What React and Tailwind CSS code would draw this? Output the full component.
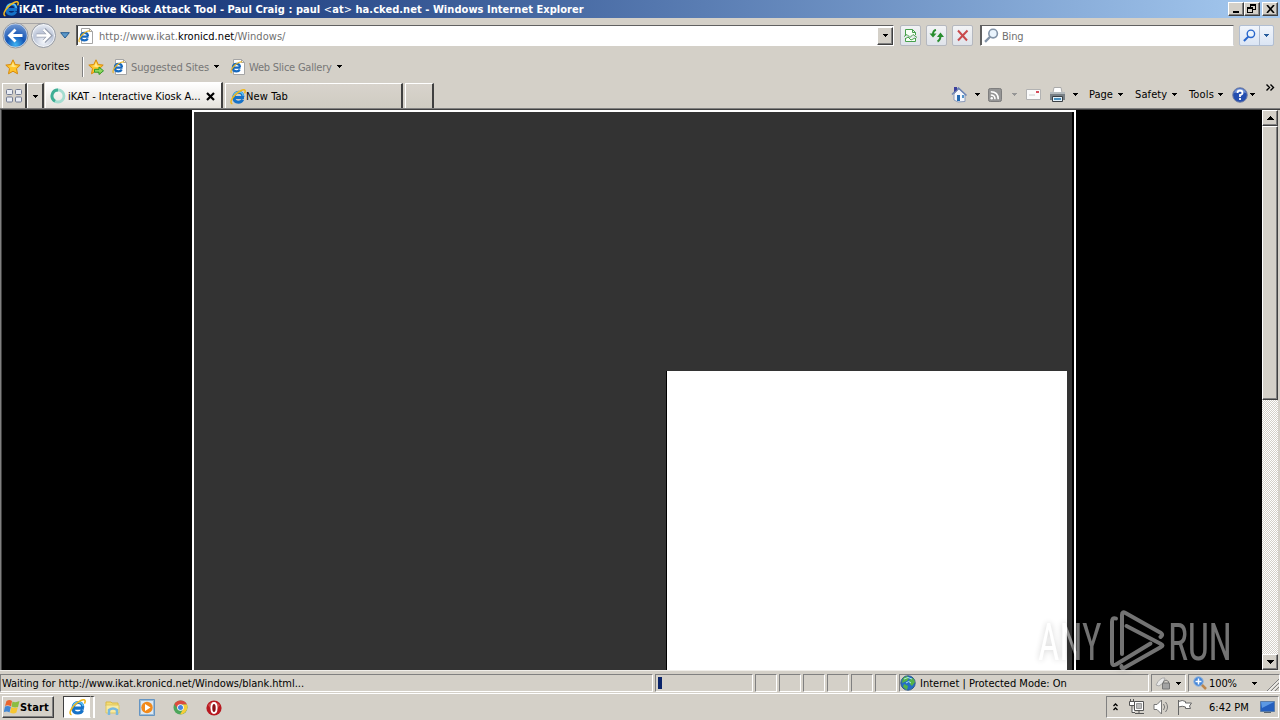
import clsx from "clsx";

const sunken = "border border-t-[#808080] border-l-[#808080] border-b-white border-r-white";
const raised =
  "border border-t-white border-l-white border-b-[#404040] border-r-[#404040] shadow-[inset_-1px_-1px_0_#808080]";
const tabEdge = "border-t border-l border-r-2 border-t-white border-l-white border-r-[#404040]";

function Caret({ className }) {
  return (
    <svg className={clsx("shrink-0", className)} width="5" height="3" viewBox="0 0 5 3" fill="currentColor" shapeRendering="crispEdges">
      <path d="M0 0h5v1H4v1H3v1H2V2H1V1H0z" />
    </svg>
  );
}

function IELogo({ size = 16, className }) {
  return (
    <svg className={clsx("shrink-0", className)} width={size} height={size} viewBox="0 0 16 16" fill="none">
      <path d="M14 8.600H5M12.900 8C12.900 5 11.300 3.300 8.800 3.300 5.800 3.300 3.800 5.600 3.800 8.600c0 2.800 1.800 4.600 4.600 4.600 2.100 0 3.600-1 4.300-2.700" stroke="#1672c8" strokeWidth="3" />
      <path d="M3.500 7.500C4.200 4.600 6.300 3 8.900 3c2.500 0 4 1.500 4.400 3.800" stroke="#5cc4f5" strokeWidth="1.400" />
      <path d="M2.400 14.900C-.6 14 1.600 9.200 5.300 5.600 9 2 13.900-.4 15 1.300c.5.900.1 2-.5 3" stroke="#efb71f" strokeWidth="1.500" />
    </svg>
  );
}

function PageIE({ className }) {
  return (
    <svg className={clsx("shrink-0", className)} width="16" height="16" viewBox="0 0 16 16" fill="none">
      <path d="M3.5.5h8l3 3v12h-11z" fill="#fff" stroke="#a5a5a5" />
      <path d="M11.5.5v3h3" stroke="#a5a5a5" />
      <path d="M10.500 8.700H3.400M10 8C9.800 6 8.500 4.900 6.600 4.900 4.300 4.900 2.900 6.600 2.900 8.900c0 2.100 1.400 3.500 3.600 3.500 1.500 0 2.700-.7 3.200-1.900" stroke="#1769bd" strokeWidth="2.200" />
      <path d="M1.600 13.900C-.2 12.900 2.200 8.600 5 6c2.800-2.500 6.400-4 7.200-2.700" stroke="#e9b424" strokeWidth="1.200" />
    </svg>
  );
}

function Star({ add, className }) {
  return (
    <svg className={clsx("shrink-0", className)} width="16" height="16" viewBox="0 0 16 16">
      <path d="M8 .8l2.2 4.7 5 .6-3.7 3.5 1 5.2L8 12.2l-4.5 2.6 1-5.2L.8 6.1l5-.6z" fill="#ffc52b" stroke="#d7890b" />
      <path d="M8 3l1.3 3.5 3 .4-3.3 1.4L4.1 7l2.5-.6z" fill="#ffe88c" />
      {add && <path d="M6.500 10.300h4.500V8l4.500 3.800-4.500 3.700v-2.300H6.500z" fill="#8fd75f" stroke="#2f9a2a" />}
    </svg>
  );
}

function CaptionButton({ children, className }) {
  return <div className={clsx("flex h-[14px] w-[16px] items-center justify-center bg-[#d4d0c8]", raised, className)}>{children}</div>;
}

function TitleBar() {
  return (
    <div className="flex h-[18px] shrink-0 items-center bg-linear-to-r from-[#0a246a] to-[#a6caf0] pr-[2px] pl-[3px] text-white">
      <IELogo />
      <span className="flex-1 text-[11px] font-bold tracking-[0.05px] whitespace-nowrap">
        iKAT - Interactive Kiosk Attack Tool - Paul Craig : paul <span className="font-normal">&lt;</span>at<span className="font-normal">&gt;</span> ha.cked.net - Windows Internet Explorer
      </span>
      <CaptionButton>
        <svg width="12" height="10" viewBox="0 0 12 10"><path d="M3 7h6v2H3z" fill="#000" /></svg>
      </CaptionButton>
      <CaptionButton>
        <svg width="10" height="10" viewBox="0 0 10 10" fill="none" stroke="#000" shapeRendering="crispEdges">
          <path d="M3.500 3V.5h5v5H6M3 1.500h6M.5 3.500h5v5h-5zM0 4.500h6" />
        </svg>
      </CaptionButton>
      <CaptionButton className="ml-[2px]">
        <svg width="9" height="8" viewBox="0 0 9 8" stroke="#000" strokeWidth="1.6"><path d="M1 0l7 8M8 0L1 8" /></svg>
      </CaptionButton>
    </div>
  );
}

function NavButtons() {
  return (
    <svg className="shrink-0" width="58" height="28" viewBox="0 0 58 28" fill="none">
      <defs>
        <radialGradient id="back" cx=".5" cy=".9" r=".9">
          <stop offset="0" stopColor="#3eb3f2" />
          <stop offset=".45" stopColor="#1455b5" />
          <stop offset="1" stopColor="#7298d2" />
        </radialGradient>
        <radialGradient id="fwd" cx=".5" cy=".8" r=".8">
          <stop offset="0" stopColor="#f3f6fb" />
          <stop offset=".6" stopColor="#bcc5d8" />
          <stop offset="1" stopColor="#e4e9f1" />
        </radialGradient>
      </defs>
      <path d="M12 1.500H44" stroke="#a8a6a6" />
      <circle cx="14.500" cy="13.500" r="12.500" fill="#d9e1ee" stroke="#92979f" />
      <circle cx="14.500" cy="13.500" r="11.300" fill="url(#back)" />
      <path d="M21.500 13.500H9M14.500 7.500l-6 6 6 6" stroke="#fff" strokeWidth="2.800" />
      <circle cx="42.500" cy="13.500" r="12" fill="#f4f6f9" stroke="#9297a1" />
      <circle cx="42.500" cy="13.500" r="10.600" fill="url(#fwd)" />
      <path d="M35.500 13.500h13M43 7.500l6 6-6 6" stroke="#979eae" strokeWidth="4" />
      <path d="M35.500 13.500H48M42.500 7.500l6 6-6 6" stroke="#fff" strokeWidth="2.400" />
    </svg>
  );
}

function ToolButton({ children, className }) {
  return (
    <div className={clsx("flex h-[21px] w-[21px] shrink-0 items-center justify-center rounded-[2px] border border-[#b5b8bf] bg-linear-to-b from-[#f2f3f5] to-[#dfe3ea]", className)}>
      {children}
    </div>
  );
}

function Magnifier({ color, size = 14, className }) {
  return (
    <svg className={className} width={size} height={size} viewBox="0 0 14 14" fill="none" stroke={color}>
      <circle cx="8.500" cy="5.200" r="4" strokeWidth="1.500" fill="#eaf4fd" />
      <path d="M5.700 8.200L1 13" strokeWidth="2.200" />
    </svg>
  );
}

function AddressBar() {
  return (
    <div className="flex h-[35px] shrink-0 items-center pl-[1px]">
      <NavButtons />
      <svg className="ml-px shrink-0" width="10" height="7" viewBox="0 0 10 7">
        <path d="M.7.700h8.600L5 6z" fill="#5b98c9" stroke="#255b91" />
      </svg>
      <div className="ml-[6px] flex h-[21px] w-[818px] items-center border border-t-[#606060] border-l-[#606060] border-b-white border-r-white bg-white shadow-[inset_1px_0_0_#404040]">
        <PageIE className="ml-px" />
        <span className="ml-[5px] flex-1 pt-px text-[11px] tracking-[0.05px] text-[#707070]">
          http://www.ikat.<span className="text-black">kronicd.net</span>/Windows/
        </span>
        <div className={clsx("flex h-[18px] w-[16px] items-center justify-center bg-[#d4d0c8]", raised)}>
          <Caret />
        </div>
      </div>
      <ToolButton className="ml-[6px]">
        <svg width="13" height="15" viewBox="0 0 13 15" fill="none" stroke="#47a04c">
          <path d="M1.500 7V1.500h7l3 3V7M8.500 1.500v3h3M1.500 10v3.500h10V10" fill="#f7fff7" />
          <path d="M0 8.500l3-2 3 3 3-3 4 3M1 11l3-2 3 3 4-2" />
        </svg>
      </ToolButton>
      <ToolButton className="ml-[5px]">
        <svg width="15" height="14" viewBox="0 0 15 14" fill="none" stroke="#288d2e" strokeWidth="2">
          <path d="M7 1Q4 1.500 4 5.500M11.500 6.500q0 4.500-3 6" />
          <path d="M.5 4.500h7L4 8.500zM8 8h7l-3.500-4.500z" fill="#288d2e" stroke="none" />
        </svg>
      </ToolButton>
      <ToolButton className="ml-[5px]">
        <svg width="13" height="13" viewBox="0 0 13 13" stroke="#c94a4c" strokeWidth="2"><path d="M2 1.500l9 10M11.500 1.500L2 11.500" /></svg>
      </ToolButton>
      <div className="ml-[7px] flex h-[21px] w-[254px] items-center border border-t-[#606060] border-l-[#606060] border-b-white border-r-[#d0d0d0] bg-white shadow-[inset_1px_0_0_#606060]">
        <Magnifier color="#8394a8" size={15} className="ml-[3px]" />
        <span className="ml-[3px] pt-px text-[11px] tracking-[-0.2px] text-[#707070]">Bing</span>
      </div>
      <div className="ml-[5px] flex h-[21px] w-[35px] rounded-[2px] border border-[#b1bed2] bg-linear-to-b from-[#f1f5fb] to-[#dbe5f4]">
        <div className="flex w-[20px] items-center justify-center border-r border-[#b1bed2]">
          <Magnifier color="#2866cc" size={13} />
        </div>
        <div className="flex flex-1 items-center justify-center text-[#285d9d]"><Caret /></div>
      </div>
    </div>
  );
}

function FavoritesBar() {
  return (
    <div className="flex h-[27px] shrink-0 items-center pl-[5px] text-[11px] whitespace-nowrap">
      <Star />
      <span className="ml-[3px] w-[58px] tracking-[0.1px]">Favorites</span>
      <div className="h-[20px] w-[2px] border-l border-[#808080] bg-white" />
      <Star add className="ml-[4px]" />
      <PageIE className="ml-[8px]" />
      <span className="ml-[3px] w-[83px] pt-px tracking-[-0.12px] text-[#777]">Suggested Sites</span>
      <Caret />
      <PageIE className="ml-[11px]" />
      <span className="ml-[3px] w-[88px] pt-px tracking-[-0.22px] text-[#777]">Web Slice Gallery</span>
      <Caret />
    </div>
  );
}

function HomeIcon() {
  return (
    <svg width="17" height="17" viewBox="0 0 17 17">
      <path d="M3 8l5-5 6 5v7.500l-7 .500-4-2z" fill="#f4f6fc" stroke="#8c9bb9" />
      <path d="M1 8.500L7.500 2l8 7.500" fill="none" stroke="#6b84b5" strokeWidth="1.600" />
      <path d="M3 1h3v3L3 6z" fill="#3d3f9c" />
      <path d="M6 9h3v6H6z" fill="#246ab1" /><path d="M11 9h2v3h-2z" fill="#5494ca" />
    </svg>
  );
}

function CommandBar() {
  return (
    <div className="flex h-full items-start pt-[6px] text-[11px]">
      <div className="flex h-[17px] items-center">
        <HomeIcon />
        <Caret className="ml-[7px]" />
        <svg className="ml-[8px]" width="14" height="14" viewBox="0 0 15 15" fill="none">
          <rect x=".5" y=".5" width="14" height="14" rx="2" fill="#969696" stroke="#777" />
          <path d="M3 4q8 0 8 8M3 7.500q4.500 0 4.500 4.500" stroke="#fff" strokeWidth="1.700" /><circle cx="4" cy="11" r="1.300" fill="#fff" />
        </svg>
        <Caret className="ml-[10px] text-[#969696]" />
        <svg className="ml-[9px]" width="15" height="11" viewBox="0 0 15 11">
          <path d="M.5.500h14v10H.500z" fill="#fbfbfb" stroke="#b2b2b2" /><path d="M10 2h3v2h-3z" fill="#d64d5c" /><path d="M3 6h6" stroke="#ccc" />
        </svg>
        <svg className="ml-[8px]" width="17" height="16" viewBox="0 0 17 16">
          <path d="M5 .5h7l1 5H4z" fill="#fff" stroke="#aaa" />
          <path d="M1 5h15v8H1z" fill="#777f85" /><path d="M1 6h15" stroke="#b4babd" strokeWidth="2" />
          <path d="M3.500 9.500h10v5h-10z" fill="#e3f1fa" stroke="#3c4145" /><path d="M5 12h7" stroke="#4b91be" strokeWidth="2" />
        </svg>
        <Caret className="ml-[7px]" />
        <span className="ml-[11px] w-[29px]">Page</span>
        <Caret />
        <span className="ml-[12px] w-[37px] tracking-[0.1px]">Safety</span>
        <Caret />
        <span className="ml-[12px] w-[29px] tracking-[0.15px]">Tools</span>
        <Caret />
        <svg className="ml-[9px]" width="16" height="16" viewBox="0 0 16 16">
          <circle cx="8" cy="8" r="7.300" fill="#244eb0" stroke="#7883a5" />
          <path d="M2 6Q3 1.500 8 1.500t6 4.500q-6-2-12 0" fill="#7393d6" />
          <path d="M5.500 6q0-2.500 2.500-2.500T10.500 6Q10.500 7.500 8 8v2M8 11v2" fill="none" stroke="#fff" strokeWidth="1.800" />
        </svg>
        <Caret className="ml-[2px]" />
      </div>
      <svg className="-mt-[2px] ml-[11px]" width="9" height="7" viewBox="0 0 9 7" fill="none" stroke="#000" strokeWidth="1.400">
        <path d="M.5.500l3 3-3 3M4.500.500l3 3-3 3" />
      </svg>
    </div>
  );
}

function TabRow() {
  return (
    <div className="flex h-[29px] shrink-0 items-end border-b border-[#808080] pl-[2px] text-[11px]">
      <div className={clsx("flex h-[25px] w-[25px] items-center justify-center", tabEdge)}>
        <svg width="16" height="14" viewBox="0 0 16 14" fill="#e9edf5" stroke="#727b92">
          <rect x=".5" y=".5" width="6" height="5" rx="1" /><rect x="9.500" y=".5" width="6" height="5" rx="1" />
          <rect x=".5" y="8" width="6" height="5" rx="1" /><rect x="9.500" y="8" width="6" height="5" rx="1" />
        </svg>
      </div>
      <div className={clsx("flex h-[25px] w-[17px] items-center justify-center", tabEdge)}>
        <Caret />
      </div>
      <div className={clsx("ml-px flex h-[26px] w-[178px] items-center bg-linear-to-b from-white to-[#e5e2dc] pt-px pl-[4px]", tabEdge)}>
        <svg width="16" height="16" viewBox="0 0 16 16" fill="none" strokeWidth="2.800">
          <circle cx="8" cy="8" r="6" stroke="#a4ddd0" /><path d="M8 2A6 6 0 0 0 5 13.200" stroke="#3fae95" />
        </svg>
        <span className="ml-[2px] flex-1 tracking-[0px] whitespace-nowrap">iKAT - Interactive Kiosk A...</span>
        <svg className="mr-[6px]" width="9" height="9" viewBox="0 0 9 9" stroke="#000" strokeWidth="2.200"><path d="M1 1l7 7M8 1L1 8" /></svg>
      </div>
      <div className={clsx("ml-[2px] flex h-[25px] w-[178px] items-center bg-linear-to-b from-[#d8d3cc] to-[#cfccc2] pt-px pl-[4px]", tabEdge)}>
        <IELogo />
        <span className="tracking-[0.1px]">New Tab</span>
      </div>
      <div className={clsx("ml-[2px] h-[25px] w-[29px] bg-linear-to-b from-[#d8d3cc] to-[#cfccc2]", tabEdge)} />
      <div className="ml-auto mr-[5px] h-full"><CommandBar /></div>
    </div>
  );
}

function ScrollButton({ up }) {
  return (
    <div className={clsx("flex h-[16px] w-[16px] shrink-0 items-center justify-center bg-[#d4d0c8]", raised)}>
      <svg className={up ? "rotate-180" : ""} width="7" height="4" viewBox="0 0 7 4" shapeRendering="crispEdges"><path d="M0 0h7v1H6v1H5v1H4v1H3V3H2V2H1V1H0z" /></svg>
    </div>
  );
}

function PageView() {
  return (
    <div className="flex h-[561px] shrink-0 border-t border-l border-t-[#404040] border-l-[#808080]">
      <div className="flex flex-1 border-l border-[#404040] bg-black pl-[190px]">
        <div className="flex w-[884px] border-2 border-b-0 border-white bg-black pr-[2px]">
          <div className="flex h-full w-full items-end justify-end bg-[#333] pr-[5px]">
            <div className="h-[299px] w-[401px] border-l border-black bg-white" />
          </div>
        </div>
      </div>
      <div className="flex w-[16px] flex-col bg-[#ece9e4]">
        <ScrollButton up />
        <div className={clsx("h-[274px] bg-[#d4d0c8]", raised)} />
        <div className="flex-1 bg-[repeating-conic-gradient(#d4d0c8_0_25%,#fff_0_50%)] bg-size-[2px_2px]" />
        <ScrollButton />
      </div>
      <div className="w-[2px] bg-[#d4d0c8]" />
    </div>
  );
}

function StatusBar() {
  return (
    <div className="flex h-[24px] shrink-0 items-start gap-[2px] border-t border-b border-t-[#f0eeea] border-b-white pt-[3px] text-[11px] whitespace-nowrap">
      <div className={clsx("flex h-[18px] w-[653px] items-center pl-px tracking-[-0.03px]", sunken)}>
        Waiting for http://www.ikat.kronicd.net/Windows/blank.html...
      </div>
      <div className={clsx("flex h-[18px] w-[98px] items-center pl-[2px]", sunken)}>
        <div className="h-[12px] w-[4px] bg-[#0a246a]" />
      </div>
      {[0, 1, 2, 3, 4, 5].map((i) => (
        <div key={i} className={clsx("h-[18px] w-[22px]", sunken)} />
      ))}
      <div className={clsx("flex h-[18px] w-[250px] items-center", sunken)}>
        <svg className="shrink-0" width="16" height="16" viewBox="0 0 16 16">
          <circle cx="8" cy="8" r="7.200" fill="#246dc5" stroke="#315989" />
          <path d="M3 3l4-2 2 2-2 3-5 2zM9 5l4-2 2 4-3 4-2-2zM4 9l4 2-1 4-4-3z" fill="#55b346" />
          <path d="M4 4q4-3 8 0M6 8q3-3 5 0" fill="none" stroke="#a8e7f2" />
        </svg>
        <span className="ml-[4px] tracking-[0px]">Internet | Protected Mode: On</span>
      </div>
      <div className={clsx("flex h-[18px] w-[35px] items-center pl-[3px]", sunken)}>
        <svg width="16" height="14" viewBox="0 0 16 14" fill="none">
          <path d="M1 9q4-8 9-7l-2 5-4 3z" fill="#e9e9e9" stroke="#aaa" /><path d="M8.500 7V5.500q2.500-3 5 0V7" stroke="#777" />
          <path d="M7.500 7h7v6h-7z" fill="#a3a3a3" stroke="#777" />
        </svg>
        <Caret className="ml-[5px]" />
      </div>
      <div className={clsx("flex h-[18px] flex-1 items-center pl-[4px]", sunken)}>
        <svg width="14" height="14" viewBox="0 0 14 14" fill="none">
          <path d="M8.500 8.500L13 13" stroke="#bd874d" strokeWidth="2.500" /><circle cx="5.500" cy="5.500" r="4.700" fill="#4687d8" stroke="#8db2de" />
          <path d="M5.500 2.500v6M2.500 5.500h6" stroke="#fff" strokeWidth="1.500" />
        </svg>
        <span className="ml-[2px] w-[43px] tracking-[-0.1px]">100%</span>
        <Caret />
        <svg className="ml-auto self-end" width="12" height="12" viewBox="0 0 12 12" stroke="#808080"><path d="M0 12L12 0M4 12l8-8M8 12l4-4" /><path d="M1.500 12L12 1.500M5.500 12L12 5.500" stroke="#fff" /></svg>
      </div>
    </div>
  );
}

function Taskbar() {
  return (
    <div className="flex flex-1 items-start pt-[2px] pr-px pl-[2px] text-[11px]">
      <div className={clsx("flex h-[22px] w-[52px] items-center pl-px", raised)}>
        <svg className="shrink-0" width="16" height="16" viewBox="0 0 16 16">
          <path d="M2.500 2q3-2 5.500 0L7 7.500Q4 5.500 1 7z" fill="#e9652f" /><path d="M8.500 2.500q3 1.500 7-.5L14 8Q10.500 9 7.500 7.500z" fill="#8bbd42" />
          <path d="M1 7.500Q4 6.200 6.900 8l-1.400 5.500Q3 11.500-.3 13.200z" fill="#4287d4" /><path d="M7.400 8q3 1.700 6.400.3L12.400 13.600q-2.900 1.800-6.400 0z" fill="#f6c632" />
        </svg>
        <span className="font-bold tracking-[0.15px]">Start</span>
      </div>
      <div className="ml-[9px] flex h-[22px] w-[28px] items-center justify-center border border-t-[#404040] border-l-[#404040] border-b-white border-r-[#d4d0c8] bg-white">
        <IELogo size={17} />
      </div>
      <div className="h-[22px] w-[4px] border-t border-r-2 border-t-[#404040] border-r-white bg-[#d4d0c8]" />
      <svg className="mt-[4px] ml-[10px]" width="16" height="16" viewBox="0 0 16 16">
        <path d="M1 2h5l1 1h6v3H1z" fill="#f5dc72" stroke="#d9b948" /><path d="M1 5h13v8H1z" fill="#f9eaa0" stroke="#dec763" />
        <path d="M4 15v-5q4-3 8 0v5" fill="none" stroke="#77b8df" strokeWidth="2.500" />
      </svg>
      <svg className="mt-[3px] ml-[18px]" width="16" height="17" viewBox="0 0 16 17">
        <path d="M.5.500h15v16H.500z" fill="#9dbbd5" stroke="#6595c3" /><path d="M2 2h12v13H2z" fill="#dbe9f5" />
        <circle cx="8" cy="8.500" r="5.700" fill="#f28a1b" /><path d="M6 5l5.500 3.500L6 12z" fill="#fff" />
      </svg>
      <svg className="mt-[4px] ml-[18px]" width="15" height="15" viewBox="0 0 15 15">
        <circle cx="7.500" cy="7.500" r="7" fill="#4ca65b" /><path d="M1.300 4Q4 0 8 .500q4 0 6 4H7.500L5 9z" fill="#dc4a3e" />
        <path d="M14 4.500q1.500 5-2 8-2 2-5 2l3.500-6-1-4z" fill="#f7cd38" /><circle cx="7.500" cy="7.500" r="3.300" fill="#fff" /><circle cx="7.500" cy="7.500" r="2.500" fill="#4485df" />
      </svg>
      <svg className="mt-[4px] ml-[18px]" width="16" height="16" viewBox="0 0 16 16">
        <circle cx="8" cy="8" r="7.600" fill="#b81920" /><path d="M2 5q5-6 12 0l-3 4H5z" fill="#da625e" opacity=".7" />
        <ellipse cx="8" cy="8" rx="2.600" ry="5" fill="#8a1016" stroke="#fff" strokeWidth="1.800" />
      </svg>
      <div className={clsx("ml-auto flex h-[22px] w-[173px] items-center pl-[6px]", sunken)}>
        <svg width="5" height="8" viewBox="0 0 5 8" fill="none" stroke="#000" strokeWidth="1.300"><path d="M.5 3l2-2 2 2M.5 7l2-2 2 2" /></svg>
        <svg className="ml-[11px]" width="16" height="16" viewBox="0 0 16 16" fill="#fff" stroke="#555">
          <path d="M5.500 2.500h9v9h-9z" /><path d="M7.500 4.500h5v5h-5z" fill="#bbb" stroke="#999" /><path d="M6 14.500h9M10 12v2" /><path d="M1.500 3V0M4.500 3V0M.5 2.500h5v4h-5zM3 7v6.500h3" />
        </svg>
        <svg className="ml-[8px]" width="17" height="16" viewBox="0 0 17 16" fill="none" stroke="#777">
          <path d="M1 5.500h3L8.500 1v14L4 10.500H1z" fill="#fff" /><path d="M10.500 5q2.500 3 0 6M12.500 3q4 5 0 10" />
        </svg>
        <svg className="ml-[7px]" width="16" height="16" viewBox="0 0 16 16" fill="#fff" stroke="#666">
          <path d="M1.500 1v15M1.500 2.500q4-2 7 0v1.500h6l-2 3 1 2.500h-5V8q-3-1.500-7 0z" />
        </svg>
        <span className="ml-[16px] w-[43px] tracking-[0px] whitespace-nowrap">6:42 PM</span>
        <svg className="ml-[8px] shrink-0" width="15" height="14" viewBox="0 0 15 14">
          <path d="M.5 1.500h14v10H.500z" fill="#245fbe" stroke="#5b7da7" /><path d="M1 2h13L2 8z" fill="#5c99e3" /><path d="M4 12.500h7" stroke="#5c6670" />
        </svg>
      </div>
    </div>
  );
}

function Watermark() {
  return (
    <svg className="absolute top-[600px] left-[1030px] opacity-45 drop-shadow-[0_0_3px_rgba(0,0,0,0.4)]" width="240" height="75" viewBox="0 0 240 75" fill="none">
      <g fill="#fff" fontFamily="Roboto, sans-serif" fontSize="51">
        <text transform="translate(8 60) scale(.73 1)">ANY</text>
        <text transform="translate(138 60) scale(.74 1)" letterSpacing="-.5">RUN</text>
      </g>
      <g stroke="#fff" strokeWidth="4" strokeLinejoin="round" strokeLinecap="round">
        <path d="M86 18.500Q82 17 82 22V62Q82 66.500 86 64.500L120.500 43.500" />
        <path d="M92 54V15Q92 11 95.500 13L131 33Q133.500 35 130.500 37" />
        <path d="M96.500 26L131 44Q134 45.500 131 47L94 68Q91 69 91.500 66" />
      </g>
    </svg>
  );
}

export default function App() {
  return (
    <div className="relative flex h-[720px] w-[1280px] flex-col overflow-hidden bg-[#d4d0c8] font-['DejaVu_Sans_Condensed','DejaVu_Sans',sans-serif] leading-none text-black [font-stretch:condensed]">
      <TitleBar />
      <AddressBar />
      <FavoritesBar />
      <TabRow />
      <PageView />
      <StatusBar />
      <Taskbar />
      <Watermark />
    </div>
  );
}
